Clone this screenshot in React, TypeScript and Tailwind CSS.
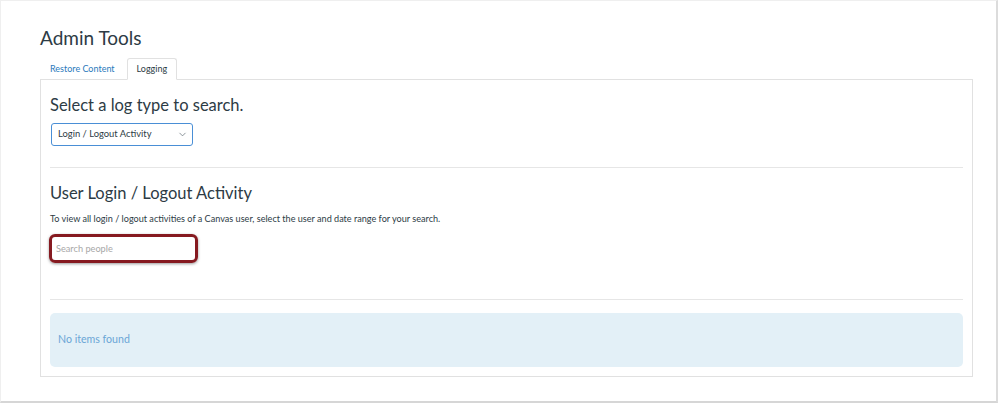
import { ChevronDown } from 'lucide-react'

export default function App() {
  return (
    <div className="w-[999px] h-[404px] bg-white font-['Lato',sans-serif] text-[#2d3b45]">
      <div className="w-[998px] h-[403px] border-t border-l border-[#efefef] border-r-2 border-b-2 border-r-[#dcdcdc] border-b-[#d6d6d6]">
        <div className="pl-[39px] pr-[23px] pt-[24px]">
          <h1 className="text-[19px] leading-[26px]">Admin Tools</h1>

          {/* Tabs */}
          <div className="mt-[7px] flex items-end gap-[2px] -mb-px relative">
            <div className="h-[22px] px-[10px] flex items-center text-[9px] text-[#2b7abc]">
              Restore Content
            </div>
            <div className="h-[22px] px-[9px] flex items-center text-[9px] bg-white border border-[#e1e1e1] border-b-white rounded-t-[3px]">
              Logging
            </div>
          </div>

          {/* Panel */}
          <div className="h-[298px] border border-[#e1e1e1] pl-[9px] pr-[9px] pt-[14px]">
            <h2 className="text-[16.5px] leading-[22px]">Select a log type to search.</h2>
            <div className="mt-[7px] ml-px w-[142px] h-[23px] border border-[#4a8fd6] rounded-[3px] flex items-center justify-between pl-[6px] pr-[4px] text-[9.4px] text-[#2d3b45]">
              <span>Login / Logout Activity</span>
              <ChevronDown size={11} strokeWidth={1.5} className="text-[#5b6770]" />
            </div>

            <div className="mt-[21px] border-t border-[#e6e6e6]" />

            <h2 className="mt-[14px] text-[16.5px] leading-[22px]">User Login / Logout Activity</h2>
            <p className="mt-[8px] text-[9.1px] leading-[14px]">
              To view all login / logout activities of a Canvas user, select the user and date range for your search.
            </p>
            <div className="mt-[8px] -ml-px w-[149px] h-[29px] border-[3px] border-[#861a20] rounded-[6px] shadow-[0_1px_3px_rgba(0,0,0,0.4)] flex items-center pl-[4px] text-[9.2px] text-[#a8a8a8]">
              Search people
            </div>

            <div className="mt-[36px] border-t border-[#e6e6e6]" />

            <div className="mt-[13px] h-[54px] rounded-[5px] bg-[#e3f0f7] flex items-center pl-[8px] text-[10.6px] font-normal text-[#6aa6d6]">
              No items found
            </div>
          </div>
        </div>
      </div>
    </div>
  )
}
